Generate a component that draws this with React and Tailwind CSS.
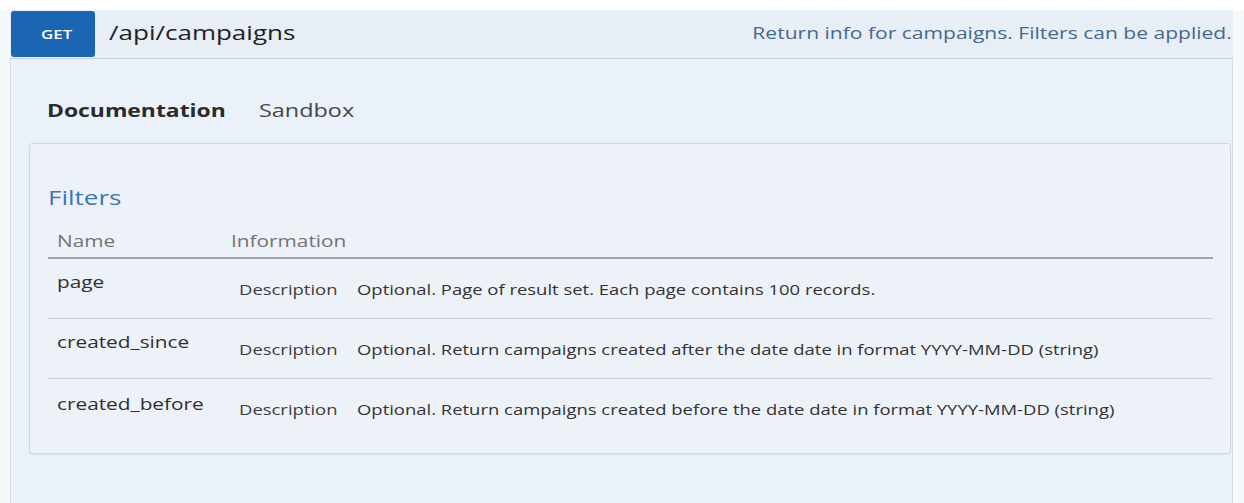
import React from "react";

const FONT = { fontFamily: '"Open Sans", "Noto Sans", Arial, sans-serif' };

const filters = [
  {
    name: "page",
    info: "Optional. Page of result set. Each page contains 100 records.",
  },
  {
    name: "created_since",
    info: "Optional. Return campaigns created after the date date in format YYYY-MM-DD (string)",
  },
  {
    name: "created_before",
    info: "Optional. Return campaigns created before the date date in format YYYY-MM-DD (string)",
  },
];

// Wide label: the console renders its type horizontally stretched.
function Wide({ className = "", right = false, children }) {
  return (
    <span
      className={`inline-block whitespace-nowrap scale-x-[1.3] ${right ? "origin-right" : "origin-left"} ${className}`}
    >
      {children}
    </span>
  );
}

function FilterRow({ name, info, last }) {
  return (
    <div className={`flex h-[60px] items-start ${last ? "" : "border-b border-[#c9d1d9]"}`}>
      <div
        className={`w-[183px] shrink-0 pl-[9px] text-[16px] text-[#2f2f2f] ${last ? "pt-[13px]" : "pt-[11px]"}`}
      >
        <Wide>{name}</Wide>
      </div>
      <div className="flex pl-[8px] pt-[20px] text-[14.2px] text-[#333]">
        <div className="w-[118px] shrink-0 text-[#3d3d3d]">
          <Wide>Description</Wide>
        </div>
        <Wide>{info}</Wide>
      </div>
    </div>
  );
}

export default function App() {
  return (
    <div className="h-[503px] w-[1244px] overflow-hidden bg-[#f6f9fc]" style={FONT}>
      <div className="h-[10px] bg-white" />
      <div className="ml-[10px] mr-[11px] flex h-[493px] flex-col">
        {/* endpoint header */}
        <div className="flex h-[49px] shrink-0 items-stretch border-b border-[#c7d0da] bg-[#e7eef6]">
          <div className="my-[1px] ml-[1px] flex w-[84px] items-center justify-center rounded-[3px] bg-[#1c65b2] pt-[1px] text-[13px] font-semibold text-white">
            <Wide className="origin-center">GET</Wide>
          </div>
          <div className="ml-[14px] flex items-center pb-[2px] text-[20px] text-[#222]">
            <Wide>/api/campaigns</Wide>
          </div>
          <div className="ml-auto flex items-center pb-[1px] pr-[1px] text-[16.2px] text-[#44698b]">
            <Wide right>Return info for campaigns. Filters can be applied.</Wide>
          </div>
        </div>

        {/* body panel */}
        <div className="flex flex-1 flex-col border-l border-r border-[#d3dce5] bg-[#eaf1f8]">
          <div className="flex h-[84px] items-center pl-[36px] pt-[18px]">
            <div className="w-[212px] shrink-0 text-[17.6px] font-bold text-[#2a2a2a]">
              <Wide>Documentation</Wide>
            </div>
            <div className="text-[18px] text-[#474747]">
              <Wide>Sandbox</Wide>
            </div>
          </div>

          <div className="ml-[18px] mr-[1px] rounded-[3px] border border-[#cfd8e1] bg-[#edf2f8] pb-[14px] pl-[18px] pr-[17px] pt-[40px] shadow-[0_1px_1px_rgba(0,0,0,0.05)]">
            <div className="text-[20px] leading-[28px] text-[#3b78b5]">
              <Wide>Filters</Wide>
            </div>
            <div className="mt-[12px] flex h-[35px] items-center border-b-2 border-[#9ea7b0] text-[16px] text-[#737373]">
              <div className="w-[183px] shrink-0 pl-[9px]">
                <Wide>Name</Wide>
              </div>
              <Wide>Information</Wide>
            </div>
            {filters.map((f, i) => (
              <FilterRow key={f.name} {...f} last={i === filters.length - 1} />
            ))}
          </div>
        </div>
      </div>
    </div>
  );
}
